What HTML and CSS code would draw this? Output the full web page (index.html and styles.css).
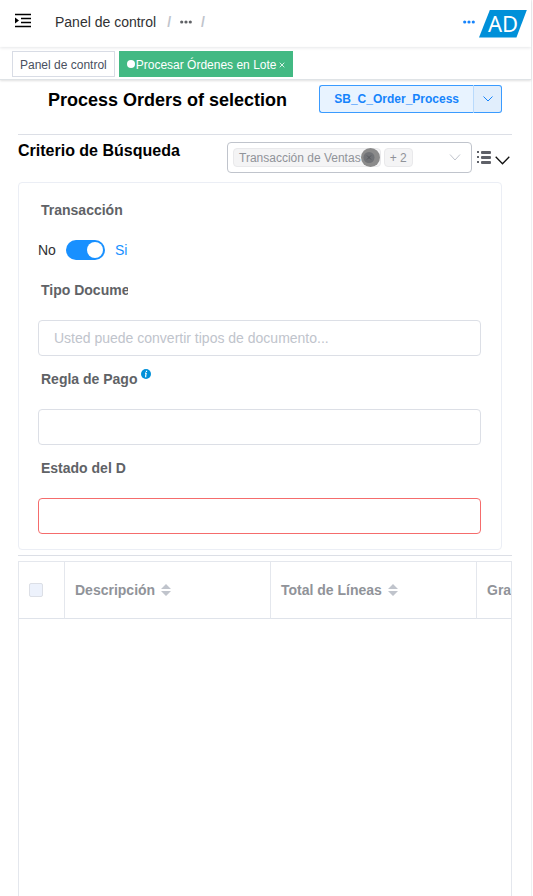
FILE: index.html
```html
<!DOCTYPE html>
<html lang="es">
<head>
<meta charset="utf-8">
<meta name="viewport" content="width=device-width, initial-scale=1">
<title>Procesar Órdenes en Lote</title>
<link rel="stylesheet" href="styles.css">
</head>
<body>
<div class="app">
  <header class="navbar">
    <button class="icon-btn menu" type="button" aria-label="Menú">
      <svg width="16" height="16" viewBox="0 0 16 16"><path d="M0 1.500h16M6 5.500h10M6 9.500h10M0 13.500h16" stroke="#000" stroke-width="1.500"/><path d="M0 4.500v6l4-3z"/></svg>
    </button>
    <nav class="breadcrumb" aria-label="Ruta">
      <a href="#">Panel de control</a>
      <span class="slash">/</span>
      <a href="#" class="dots" aria-label="Más niveles"><svg width="12" height="4" viewBox="0 0 12 4"><circle cx="1.700" cy="2" r="1.600"/><circle cx="6" cy="2" r="1.600"/><circle cx="10.300" cy="2" r="1.600"/></svg></a>
      <span class="slash last">/</span>
    </nav>
    <button class="icon-btn more" type="button" aria-label="Más opciones"><svg width="12" height="4" viewBox="0 0 12 4"><circle cx="1.700" cy="2" r="1.600"/><circle cx="6" cy="2" r="1.600"/><circle cx="10.300" cy="2" r="1.600"/></svg></button>
    <a class="logo" href="#">AD</a>
  </header>

  <nav class="tags" aria-label="Pestañas">
    <a class="tag" href="#">Panel de control</a>
    <a class="tag active" href="#"><i class="dot"></i>Procesar Órdenes en Lote<svg class="close" width="6" height="6" viewBox="0 0 6 6"><path d="M.7.7l4.600 4.600M5.300.7L.7 5.300" stroke="#fff" stroke-width=".8"/></svg></a>
  </nav>

  <main class="content">
    <div class="title-row">
      <h1>Process Orders of selection</h1>
      <div class="split">
        <button type="button" class="split-main">SB_C_Order_Process</button>
        <button type="button" class="split-arrow" aria-label="Más procesos"><svg width="10" height="6" viewBox="0 0 10 6"><path d="M.5.5L5 5 9.500.5" fill="none" stroke="currentColor"/></svg></button>
      </div>
    </div>

    <section class="criteria">
      <div class="criteria-head">
        <h2>Criterio de Búsqueda</h2>
        <div class="tools">
          <button type="button" class="multi" aria-label="Campos">
            <span class="chip first">Transacción de Ventas<svg class="chip-x" width="19" height="19" viewBox="0 0 19 19"><circle cx="9.500" cy="9.500" r="9.500" fill="#8b8b8b"/><circle cx="8" cy="9.500" r="5.500" fill="#707276"/><path d="M6 7.500l4 4M10 7.500l-4 4" stroke="#55585c" fill="none"/></svg></span>
            <span class="chip">+ 2</span>
            <svg class="caret" width="12" height="7" viewBox="0 0 12 7"><path d="M1 .5l5 5.500 5-5.500" fill="none" stroke="#c0c4cc"/></svg>
          </button>
          <button type="button" class="icon-btn list" aria-label="Opciones de lista">
            <svg width="14" height="15" viewBox="0 0 14 15" fill="#5f6168"><rect x="4" y="1" width="10" height="3" rx="1"/><rect x="4" y="6" width="10" height="3" rx="1"/><rect x="4" y="11" width="10" height="3" rx="1"/><rect y="1" width="2" height="2"/><rect y="6" width="2" height="2"/><rect y="11" width="2" height="2"/></svg>
            <svg class="fold" width="15" height="9" viewBox="0 0 15 9"><path d="M.7.8l6.800 7 6.800-7" fill="none" stroke="#111" stroke-width="1.300"/></svg>
          </button>
        </div>
      </div>

      <form class="card">
        <div class="field">
          <label class="label" for="trx">Transacción</label>
          <div class="switch-row"><span>No</span><input class="switch" type="checkbox" role="switch" id="trx" checked><span class="on">Si</span></div>
        </div>
        <div class="field">
          <label class="label clip" for="doctype">Tipo Documento</label>
          <input class="input" id="doctype" type="text" placeholder="Usted puede convertir tipos de documento...">
        </div>
        <div class="field">
          <label class="label with-info" for="rule">Regla de Pago<svg class="info" width="10" height="10" viewBox="0 0 10 10"><circle cx="5" cy="5" r="5" fill="#0090d9"/><path d="M5.200 4L4.500 7.800M4 4.200h1.200M4 7.700h1.300M5.500 1.800v1.200" fill="none" stroke="#fff" stroke-width="1.200"/></svg></label>
          <input class="input" id="rule" type="text">
        </div>
        <div class="field">
          <label class="label" for="status">Estado del D</label>
          <input class="input error" id="status" type="text">
        </div>
      </form>
    </section>

    <div class="table-wrap">
      <table>
        <colgroup><col class="c-check"><col class="c-data"><col class="c-data"><col class="c-data"></colgroup>
        <thead>
          <tr>
            <th class="check"><input type="checkbox" aria-label="Seleccionar todo" disabled></th>
            <th>Descripción<svg class="sort" width="10" height="12" viewBox="0 0 10 12"><path d="M5 0l5 5H0zM0 7h10l-5 5z"/></svg></th>
            <th>Total de Líneas<svg class="sort" width="10" height="12" viewBox="0 0 10 12"><path d="M5 0l5 5H0zM0 7h10l-5 5z"/></svg></th>
            <th>Gran Total</th>
          </tr>
        </thead>
        <tbody></tbody>
      </table>
    </div>
  </main>
</div>
</body>
</html>
```
FILE: styles.css
```css
* { box-sizing: border-box; }
html, body { height: 100%; margin: 0; }
body {
  font-family: "Liberation Sans", Arial, sans-serif;
  font-size: 14px;
  color: #303133;
  background: #fff;
  overflow: hidden;
}
button, input { font: inherit; }
a { color: inherit; text-decoration: none; }
svg { flex: none; }
h1, h2 { margin: 0; color: #000; }

.app {
  display: flex;
  flex-direction: column;
  height: 100vh;
  margin-right: 1px;
  border-right: 1px solid #f0f0f2;
}
.icon-btn { display: flex; align-items: center; padding: 0; border: 0; background: none; }

.navbar {
  display: flex;
  align-items: center;
  height: 47px;
  flex: none;
  padding: 0 4px 0 15px;
  box-shadow: 0 1px 3px rgba(0, 21, 41, .1);
}
.menu { margin-bottom: 6px; }
.breadcrumb { display: flex; align-items: center; margin: 0 auto 3px 24px; line-height: 20px; }
.slash { margin: 0 9px 0 11px; font-weight: bold; color: #c0c4cc; }
.slash.last { margin-left: 9px; }
.dots { display: flex; fill: #606266; }
.more { margin: 0 4px 3px 0; fill: #1684fc; }
.logo {
  width: 48px;
  height: 28px;
  background: #0090d9;
  clip-path: polygon(23% 0, 100% 0, 78% 100%, 0 100%);
  color: #fff;
  font: 22px/27px "Noto Sans", sans-serif;
  text-align: center;
}

.tags {
  display: flex;
  gap: 4px;
  flex: none;
  height: 33px;
  padding: 4px 12px 2px;
  border-bottom: 1px solid #dfe3e6;
  box-shadow: 0 1px 2px rgba(0, 0, 0, .12);
}
.tag {
  display: flex;
  align-items: center;
  height: 26px;
  padding: 2px 7px 0;
  border: 1px solid #d8dce5;
  color: #495060;
  font-size: 12px;
}
.tag.active { background: #42b983; border-color: #42b983; color: #fff; }
.dot { width: 8px; height: 8px; margin: 0 1px 3px 0; border-radius: 50%; background: #fff; }
.close { margin: 0 0 1px 3px; }

.content { display: flex; flex-direction: column; flex: 1; min-height: 0; padding: 5px 19px 0 18px; }
.title-row {
  display: flex;
  justify-content: space-between;
  height: 50px;
  padding: 0 10px 0 30px;
  border-bottom: 1px solid #dcdfe6;
}
h1 { font-size: 18px; line-height: 30px; white-space: nowrap; }
.split { display: flex; height: 28px; }
.split button { border: 1px solid #3a9bff; background: #e8f3ff; color: #1684fc; }
.split .split-main { padding: 0 14px; border-radius: 3px 0 0 3px; border-right: 1px solid #b9dafc; font-size: 12px; font-weight: bold; }
.split .split-arrow {
  display: flex;
  align-items: center;
  justify-content: center;
  width: 28px;
  padding: 0;
  border-left: 0;
  border-radius: 0 3px 3px 0;
  background: #e1eefc;
}

.criteria { flex: none; padding-bottom: 5px; border-bottom: 1px solid #dcdfe6; }
.criteria-head { display: flex; justify-content: space-between; height: 47px; padding-top: 7px; }
h2 { font-size: 16px; line-height: 18px; white-space: nowrap; }
.tools { display: flex; gap: 5px; height: 31px; margin-right: 2px; }
.multi {
  display: flex;
  align-items: center;
  gap: 3px;
  width: 245px;
  padding: 0 10px 0 5px;
  border: 1px solid #c0c4cc;
  border-radius: 4px;
  background: #fff;
}
.chip {
  display: flex;
  align-items: center;
  height: 19px;
  padding: 0 5px;
  border: 1px solid #e9e9eb;
  border-radius: 4px;
  background: #f4f4f5;
  color: #909399;
  font-size: 12px;
  white-space: nowrap;
}
.chip.first { padding-right: 0; }
.chip-x { margin-left: 0; }
.caret { margin-left: auto; }
.list { gap: 4px; }
.fold { margin-top: 5px; }

.card { margin-right: 10px; padding: 7px 20px 15px 19px; border: 1px solid #ebeef5; border-radius: 4px; }
.field { display: flex; flex-direction: column; }
.field + .field { margin-top: 3px; }
.label { display: block; height: 40px; padding-left: 3px; line-height: 40px; font-weight: bold; color: #606266; white-space: nowrap; }
.clip { width: 90px; overflow: hidden; }
.with-info { display: flex; align-items: center; gap: 4px; }
.info { margin-bottom: 10px; }
.switch-row { display: flex; align-items: center; gap: 10px; height: 31px; margin-bottom: 6px; padding-top: 9px; }
.switch {
  appearance: none;
  display: flex;
  justify-content: flex-end;
  width: 39px;
  height: 20px;
  margin: 0;
  padding: 2px;
  border-radius: 10px;
  background: #1890ff;
}
.switch::before { content: ""; width: 16px; height: 16px; border-radius: 50%; background: #fff; }
.switch:not(:checked) { justify-content: flex-start; background: #dcdfe6; }
.on { color: #1890ff; }
.input {
  width: 100%;
  height: 36px;
  margin-top: 10px;
  padding: 0 15px;
  border: 1px solid #dcdfe6;
  border-radius: 4px;
  outline: 0;
  color: #606266;
  background: #fff;
}
.input::placeholder { color: #c0c4cc; }
.input.error { border-color: #f56c6c; }

.table-wrap { flex: 1; min-height: 0; margin-top: 5px; overflow: hidden; border: 1px solid #e4e7ed; border-bottom: 0; }
table { width: 664px; table-layout: fixed; border-collapse: separate; border-spacing: 0; }
.c-check { width: 46px; }
.c-data { width: 206px; }
th {
  height: 57px;
  padding: 0 10px;
  border-right: 1px solid #e4e7ed;
  border-bottom: 1px solid #dfe3ea;
  color: #909399;
  text-align: left;
  white-space: nowrap;
}
.sort { margin-left: 6px; vertical-align: -1px; fill: #c0c4cc; }
.check input { appearance: none; display: block; width: 14px; height: 14px; margin: 0; border: 1px solid #dcdfe6; border-radius: 2px; background: #edf2fc; }
```
